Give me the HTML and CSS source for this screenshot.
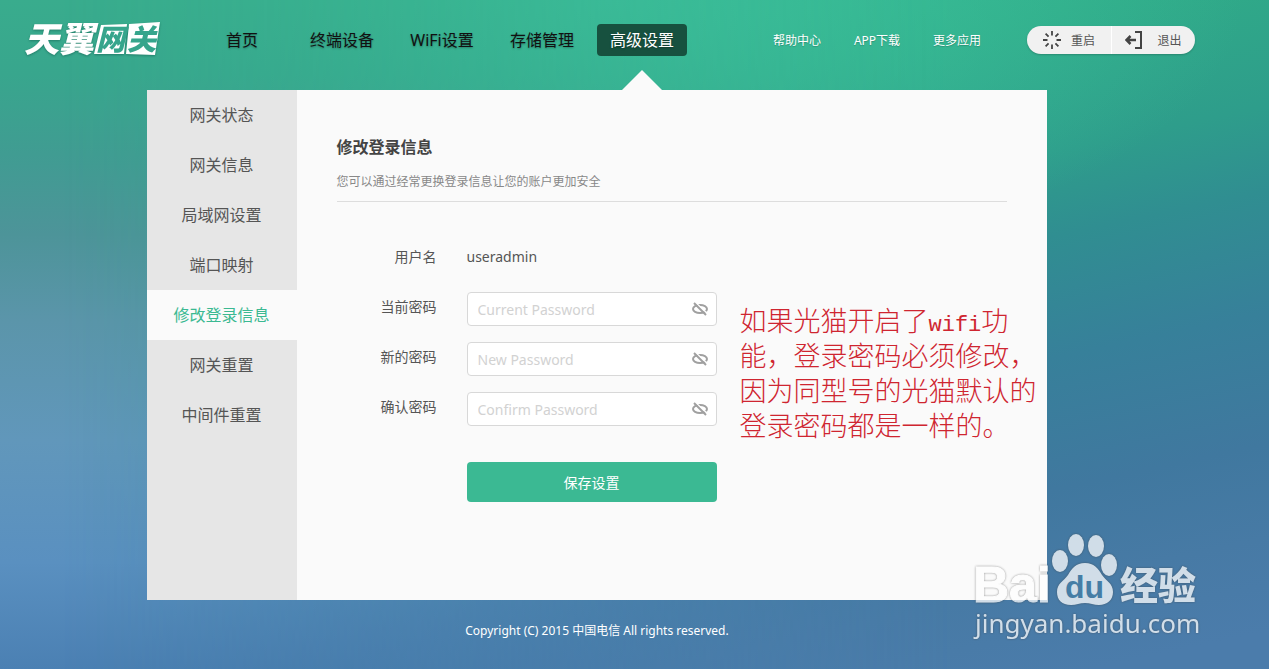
FILE: index.html
```html
<!DOCTYPE html>
<html lang="zh-CN">
<head>
<meta charset="utf-8">
<title>天翼网关</title>
<link rel="stylesheet" href="styles.css">
</head>
<body>
<svg class="defs" aria-hidden="true">
  <symbol id="eye-off" viewBox="0 0 18 14">
    <g fill="none" stroke="#a0a0a0" stroke-width="2">
      <ellipse cx="9" cy="7" rx="7" ry="4"/>
      <path d="M5 1l12 11" stroke="#fff" stroke-width="1.500"/>
      <path d="M3 1l12 12"/>
    </g>
  </symbol>
</svg>
<header class="header">
  <a class="logo" href="#">
    <svg width="143" height="40" viewBox="0 0 143 40">
      <path fill="#fff" d="M77 5l26-1-3 30H70zM105 4l31-2-5 33-29-1z"/>
      <text class="logo-text" x="0" y="32">天翼</text>
      <text class="logo-cut" x="72" y="30">网</text>
      <text class="logo-cut" x="103" y="30">关</text>
    </svg>
  </a>
  <nav class="nav">
    <a href="#">首页</a>
    <a href="#">终端设备</a>
    <a href="#">WiFi设置</a>
    <a href="#">存储管理</a>
    <a class="current" href="#">高级设置</a>
  </nav>
  <nav class="links">
    <a href="#">帮助中心</a>
    <a href="#">APP下载</a>
    <a href="#">更多应用</a>
  </nav>
  <div class="actions">
    <button type="button">
      <svg width="18" height="18" viewBox="0 0 18 18" fill="none" stroke="#444" stroke-width="1.800"><path d="M9 0v4.500M9 13.500V18M0 9h4.500M13.500 9H18M2.600 2.600l3 3M12.400 12.400l3 3M2.600 15.400l3-3M12.400 5.600l3-3"/></svg>
      重启
    </button>
    <button type="button">
      <svg width="18" height="18" viewBox="0 0 18 18" fill="none" stroke="#444" stroke-width="2"><path d="M10 1h6v16h-6"/><path stroke-width="2.500" d="M1.500 9H11M5.500 5L1.500 9l4 4"/></svg>
      退出
    </button>
  </div>
</header>
<main class="panel">
  <nav class="sidebar">
    <a href="#">网关状态</a>
    <a href="#">网关信息</a>
    <a href="#">局域网设置</a>
    <a href="#">端口映射</a>
    <a class="selected" href="#">修改登录信息</a>
    <a href="#">网关重置</a>
    <a href="#">中间件重置</a>
  </nav>
  <section class="content">
    <h1>修改登录信息</h1>
    <p class="intro">您可以通过经常更换登录信息让您的账户更加安全</p>
    <div class="columns">
      <form class="form">
        <div class="row"><span class="label">用户名</span><span class="value">useradmin</span></div>
        <div class="row">
          <label class="label" for="current">当前密码</label>
          <div class="field"><input id="current" type="password" placeholder="Current Password"><button type="button" aria-label="显示密码"><svg width="18" height="14"><use href="#eye-off"/></svg></button></div>
        </div>
        <div class="row">
          <label class="label" for="new">新的密码</label>
          <div class="field"><input id="new" type="password" placeholder="New Password"><button type="button" aria-label="显示密码"><svg width="18" height="14"><use href="#eye-off"/></svg></button></div>
        </div>
        <div class="row">
          <label class="label" for="confirm">确认密码</label>
          <div class="field"><input id="confirm" type="password" placeholder="Confirm Password"><button type="button" aria-label="显示密码"><svg width="18" height="14"><use href="#eye-off"/></svg></button></div>
        </div>
        <button class="save" type="button">保存设置</button>
      </form>
      <p class="note">如果光猫开启了<span class="mono">wifi</span>功<br>能，登录密码必须修改，<br>因为同型号的光猫默认的<br>登录密码都是一样的。</p>
    </div>
  </section>
</main>
<footer class="footer">Copyright (C) 2015 中国电信 All rights reserved.</footer>
<svg class="watermark" width="260" height="140" viewBox="0 0 260 140" role="img" aria-label="Baidu 经验">
  <g class="mark">
    <text class="bai" x="13" y="82">Bai</text>
    <ellipse cx="100" cy="41" rx="8" ry="11"/>
    <ellipse cx="116" cy="25" rx="8" ry="11"/>
    <ellipse cx="136" cy="26" rx="8" ry="11"/>
    <ellipse cx="149" cy="45" rx="8" ry="11"/>
    <path d="M125 43c9 0 13 5 17 12 4 6 11 8 11 17 0 8-6 13-14 13-5 0-9-2-14-2s-9 2-14 2c-9 0-14-5-14-13 0-9 7-11 11-17 4-7 8-12 17-12z"/>
    <text class="jingyan" x="160" y="79">经验</text>
    <text class="url" x="15" y="113">jingyan.baidu.com</text>
  </g>
  <text class="du" x="105" y="78">du</text>
</svg>
</body>
</html>
```
FILE: styles.css
```css
* { box-sizing: border-box; }

body {
  position: relative;
  z-index: 0;
  min-height: 100vh;
  margin: 0;
  color: #555;
  font-family: "Noto Sans", "Noto Sans CJK SC", sans-serif;
  font-size: 14px;
  background: linear-gradient(180deg, #39ac8d 0%, #38a68d 11%, #409c92 23%, #4d9499 35%, #5b95aa 48%, #6197bb 66%, #5a90c0 84%, #4b80b3 100%);
}
body::before {
  position: absolute;
  inset: 0;
  z-index: -1;
  background:
    radial-gradient(ellipse 50% 40% at 48% 0%, #3bc39d 0%, rgba(59, 195, 157, 0) 100%),
    linear-gradient(168deg, #34b58d 10%, #30ab88 25%, #2e9d8b 40%, #308e91 49%, #37809a 62%, #40789f 76%, #477aa5 86%, #4b7cab 96%);
  mask-image: linear-gradient(90deg, transparent 5%, #000 75%);
  content: "";
}

a { color: inherit; text-decoration: none; }
button { padding: 0; border: 0; background: none; color: inherit; font: inherit; cursor: pointer; }
.defs { position: absolute; width: 0; height: 0; }

.header { display: flex; align-items: center; height: 90px; padding: 0 0 10px 24px; }

.logo { display: flex; flex: none; margin-right: 30px; }
.logo svg { overflow: visible; filter: drop-shadow(0 1px 1px rgba(0, 60, 50, 0.4)); }
.logo-text { fill: #fff; font: italic 900 35px "Noto Sans CJK SC", sans-serif; }
.logo-cut { fill: #36a58c; font: italic 900 29px "Noto Sans CJK SC", sans-serif; }

.nav { display: flex; flex: none; gap: 10px; color: #111; font-size: 16px; text-shadow: 0 1px 2px rgba(0, 0, 0, 0.3); }
.nav a { position: relative; width: 90px; line-height: 32px; border-radius: 4px; text-align: center; }
.nav .current { color: #fff; background: #17513f; }
.nav .current::after {
  position: absolute;
  top: 46px;
  left: 25px;
  border: 20px solid transparent;
  border-top: 0;
  border-bottom-color: #fafafa;
  content: "";
}

.links { display: flex; flex: none; margin: 0 30px 0 70px; color: #fff; font-size: 12px; text-align: center; text-shadow: 0 1px 1px rgba(0, 0, 0, 0.2); }
.links a { width: 80px; }

.actions { display: flex; flex: none; overflow: hidden; border-radius: 14px; background: #f1f1f1; box-shadow: 0 1px 2px rgba(0, 0, 0, 0.2); }
.actions button { display: flex; align-items: center; justify-content: center; gap: 10px; width: 84px; height: 28px; font-size: 12px; color: #555; }
.actions button + button { gap: 14px; border-left: 1px solid #fff; }

.panel { display: flex; width: 900px; min-height: 510px; margin-left: calc(50% - 488px); background: #fafafa; }
.sidebar { flex: none; width: 150px; background: #e6e6e6; font-size: 16px; line-height: 50px; text-align: center; }
.sidebar a { display: block; }
.sidebar .selected { color: #3bb992; background: #fafafa; }

.content { flex: 1; padding: 45px 40px 0; }
h1 { margin: 0; font-size: 16px; line-height: 24px; color: #444; }
.intro { margin: 13px 0 0; padding-bottom: 9px; border-bottom: 1px solid #ddd; color: #888; font-size: 12px; line-height: 20px; }

.columns { display: flex; gap: 23px; margin-right: -40px; }
.form { flex: none; width: 380px; padding-top: 40px; }
.row { display: flex; gap: 30px; height: 50px; line-height: 30px; }
.label { width: 100px; text-align: right; }
.field { position: relative; width: 250px; }
.field input {
  width: 100%;
  height: 34px;
  padding: 0 36px 0 10px;
  border: 1px solid #d8d8d8;
  border-radius: 4px;
  background: #fff;
  color: #555;
  font: inherit;
}
.field input::placeholder { color: #d2d2d2; }
.field button { position: absolute; top: 10px; right: 8px; display: flex; }
.save { display: block; width: 250px; height: 40px; margin: 20px 0 0 130px; border-radius: 4px; background: #3bb993; color: #fff; }

.note {
  flex: 1;
  margin: 100px 0 0;
  color: #cf2530;
  font-family: "Noto Sans CJK SC", sans-serif;
  font-size: 27px;
  font-weight: 300;
  line-height: 35px;
  white-space: nowrap;
}
.mono { font-family: "Liberation Mono", monospace; font-size: 22px; line-height: 1; }

.footer { padding: 20px 75px 0 0; color: #fff; font-size: 12px; line-height: 22px; text-align: center; }

.watermark { position: absolute; right: 49px; bottom: 9px; }
.mark { fill: #fff; opacity: 0.75; filter: drop-shadow(0 0 1px rgba(60, 60, 60, 0.7)); }
.bai { font: bold 50px "Liberation Sans", sans-serif; stroke: #fff; stroke-width: 1; }
.jingyan { font: 900 38px "Noto Sans CJK SC", sans-serif; }
.url { font: 26px "Noto Sans", sans-serif; }
.du { fill: #457da5; font: bold 32px "Liberation Sans", sans-serif; }
```
